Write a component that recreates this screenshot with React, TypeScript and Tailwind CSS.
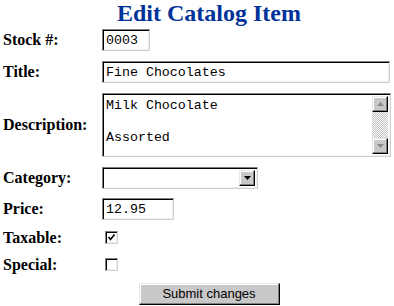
import React from "react";

// classic win9x-style inset field
const inset =
    "border border-t-[#808080] border-l-[#808080] border-r-[#d4d0c8] border-b-[#d4d0c8] shadow-[inset_1px_1px_0_#000,inset_-1px_-1px_0_#f0f0f0] bg-white";
const outset =
    "border border-t-[#e8e8e8] border-l-[#e8e8e8] border-r-[#000] border-b-[#000] shadow-[inset_-1px_-1px_0_#808080,inset_1px_1px_0_#ffffff] bg-[#c8c8c8]";

const Label = ({ children }: { children: React.ReactNode }) => (
    <div className="w-[102px] shrink-0 pl-[3px] text-[16px] font-bold text-black">{children}</div>
);

const Arrow = ({ up, color }: { up?: boolean; color: string }) => (
    <svg width="7" height="4" viewBox="0 0 7 4">
        {up ? (
            <polygon points="0,4 7,4 3.5,0" fill={color} />
        ) : (
            <polygon points="0,0 7,0 3.5,4" fill={color} />
        )}
    </svg>
);

const Checkbox = ({ checked }: { checked?: boolean }) => (
    <div className={`${inset} ml-[3px] flex h-[13px] w-[13px] items-center justify-center`}>
        {checked && (
            <svg width="9" height="9" viewBox="0 0 9 9">
                <path d="M1.5 4 L3.5 6.5 L7.5 1.5" stroke="#000" strokeWidth="1.6" fill="none" />
            </svg>
        )}
    </div>
);

export default function App() {
    const field = `${inset} h-[22px] px-[3px] text-[13.3px] text-black outline-none appearance-none [font-family:'Liberation_Mono',monospace]`;

    return (
        <div className="h-[306px] w-[394px] bg-white [font-family:'Liberation_Serif',serif]">
            <div className="flex h-[29px] items-start justify-center pl-[24px]">
                <h1 className="text-[24px] font-bold leading-[27px] text-[#003399]">Edit Catalog Item</h1>
            </div>

            <form className="flex flex-col" onSubmit={(e) => e.preventDefault()}>
                {/* Stock */}
                <div className="flex h-[22px] items-center">
                    <Label>Stock #:</Label>
                    <input className={`${field} w-[48px]`} defaultValue="0003" readOnly />
                </div>

                {/* Title */}
                <div className="mt-[10px] flex h-[22px] items-center">
                    <Label>Title:</Label>
                    <input className={`${field} w-[288px]`} defaultValue="Fine Chocolates" readOnly />
                </div>

                {/* Description */}
                <div className="mt-[10px] flex h-[64px] items-center">
                    <Label>Description:</Label>
                    <div className={`${inset} flex h-[64px] w-[289px] p-[2px]`}>
                        <div className="flex-1 px-[1px] pt-[2px] text-[13.3px] leading-[16px] text-black [font-family:'Liberation_Mono',monospace]">
                            <div>Milk Chocolate</div>
                            <div>&nbsp;</div>
                            <div>Assorted</div>
                        </div>
                        <div className="flex w-[16px] flex-col">
                            <div className={`${outset} flex h-[16px] items-center justify-center`}>
                                <Arrow up color="#8a8a8a" />
                            </div>
                            <div className="flex-1 bg-[image:repeating-conic-gradient(#c0c0c0_0%_25%,#ffffff_0%_50%)] bg-size-[2px_2px]" />
                            <div className={`${outset} flex h-[16px] items-center justify-center`}>
                                <Arrow color="#8a8a8a" />
                            </div>
                        </div>
                    </div>
                </div>

                {/* Category */}
                <div className="mt-[10px] flex h-[22px] items-center">
                    <Label>Category:</Label>
                    <div className={`${inset} flex h-[22px] w-[156px] justify-end p-[2px]`}>
                        <div className={`${outset} flex w-[16px] items-center justify-center`}>
                            <Arrow color="#000" />
                        </div>
                    </div>
                </div>

                {/* Price */}
                <div className="mt-[9px] flex h-[22px] items-center">
                    <Label>Price:</Label>
                    <input className={`${field} w-[72px]`} defaultValue="12.95" readOnly />
                </div>

                {/* Taxable */}
                <div className="mt-[4px] flex h-[27px] items-center">
                    <Label>Taxable:</Label>
                    <Checkbox checked />
                </div>

                {/* Special */}
                <div className="flex h-[27px] items-center">
                    <Label>Special:</Label>
                    <Checkbox />
                </div>

                <div className="mt-[5px] flex justify-center pl-[24px]">
                    <button
                        type="submit"
                        className={`${outset} h-[22px] w-[141px] text-[13px] text-black [font-family:'Liberation_Sans',Arial,sans-serif]`}
                    >
                        Submit changes
                    </button>
                </div>
            </form>
        </div>
    );
}
